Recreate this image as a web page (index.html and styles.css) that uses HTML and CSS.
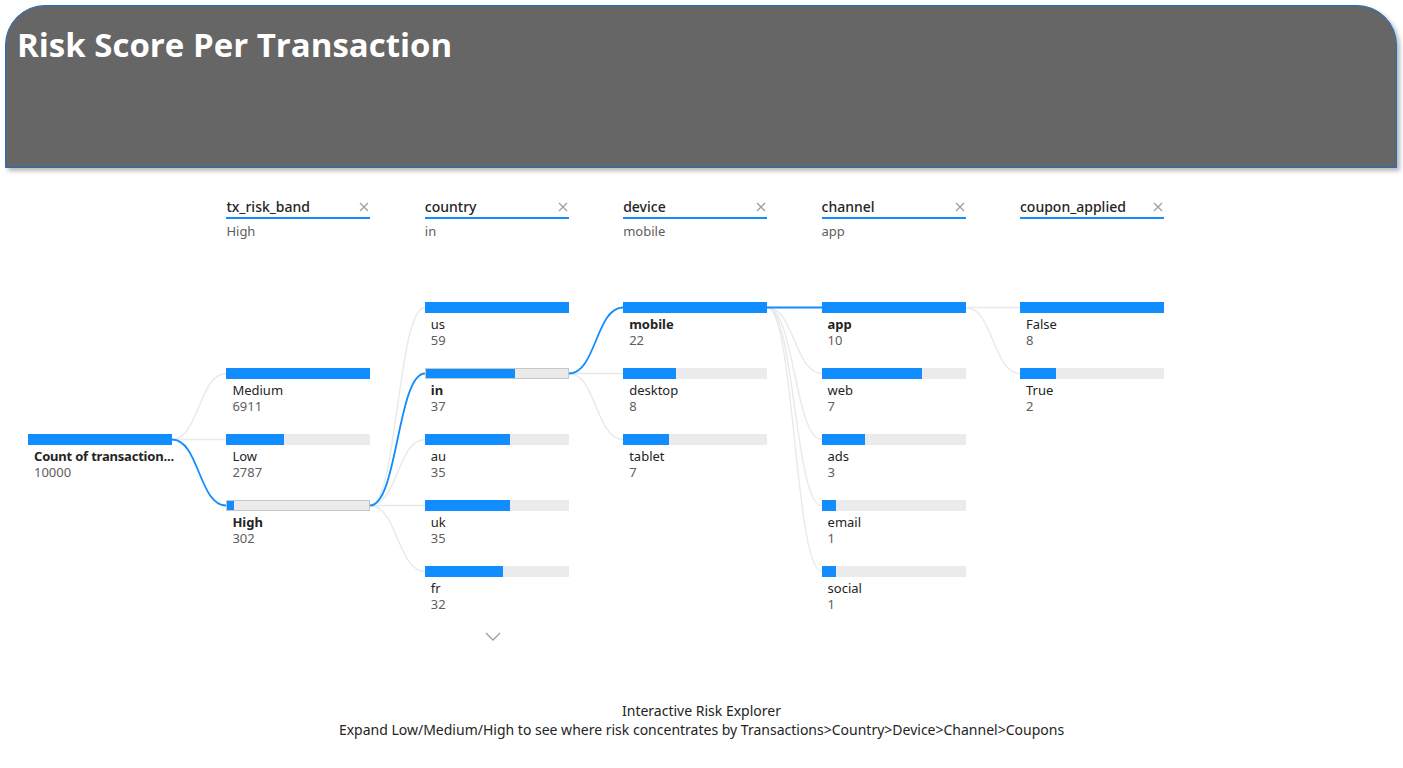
FILE: index.html
```html
<!DOCTYPE html>
<html lang="en">
<head>
<meta charset="utf-8">
<title>Risk Score Per Transaction</title>
<link rel="stylesheet" href="styles.css">
</head>
<body>
<header class="banner">
  <h1 class="banner-title">Risk Score Per Transaction</h1>
</header>

<main class="tree">
  <svg class="links" viewBox="0 197 1403 504" width="1403" height="504" aria-hidden="true">
    <g class="link-muted">
      <path d="M172 439.5 C199 439.5 199 373.5 226 373.5"/>
      <path d="M172 439.5 L226 439.5"/>
      <path d="M370 505.5 C397.5 505.5 397.5 307.5 425 307.5"/>
      <path d="M370 505.5 C397.5 505.5 397.5 439.5 425 439.5"/>
      <path d="M370 505.5 L425 505.5"/>
      <path d="M370 505.5 C397.5 505.5 397.5 571.5 425 571.5"/>
      <path d="M569 373.5 L623 373.5"/>
      <path d="M569 373.5 C596 373.5 596 439.5 623 439.5"/>
      <path d="M767 307.5 C794.5 307.5 794.5 373.5 822 373.5"/>
      <path d="M767 307.5 C794.5 307.5 794.5 439.5 822 439.5"/>
      <path d="M767 307.5 C794.5 307.5 794.5 505.5 822 505.5"/>
      <path d="M767 307.5 C794.5 307.5 794.5 571.5 822 571.5"/>
      <path d="M966 307.5 L1020 307.5"/>
      <path d="M966 307.5 C993 307.5 993 373.5 1020 373.5"/>
    </g>
    <g class="link-active">
      <path d="M172 439.5 C199 439.5 199 505.5 226 505.5"/>
      <path d="M370 505.5 C397.5 505.5 397.5 373.5 425 373.5"/>
      <path d="M569 373.5 C596 373.5 596 307.5 623 307.5"/>
      <path d="M767 307.5 L822 307.5"/>
    </g>
  </svg>

  <div class="cols">
    <section class="col">
      <div class="col-head col-head-empty"></div>
      <div class="nodes start-2">
        <div class="node">
          <div class="bar"><div class="fill" style="width:100%"></div></div>
          <div class="label strong root-label">Count of transaction...</div>
          <div class="value">10000</div>
        </div>
      </div>
    </section>

    <section class="col">
      <div class="col-head">
        <div class="head-row"><span class="head-name">tx_risk_band</span><svg class="close" viewBox="0 0 10 10"><path d="M1 1 L9 9 M9 1 L1 9"/></svg></div>
        <div class="head-sub">High</div>
      </div>
      <div class="nodes start-1">
        <div class="node">
          <div class="bar"><div class="fill" style="width:100%"></div></div>
          <div class="label">Medium</div>
          <div class="value">6911</div>
        </div>
        <div class="node">
          <div class="bar"><div class="fill" style="width:40.3%"></div></div>
          <div class="label">Low</div>
          <div class="value">2787</div>
        </div>
        <div class="node">
          <div class="bar selected"><div class="fill" style="width:4.4%"></div></div>
          <div class="label strong">High</div>
          <div class="value">302</div>
        </div>
      </div>
    </section>

    <section class="col">
      <div class="col-head">
        <div class="head-row"><span class="head-name">country</span><svg class="close" viewBox="0 0 10 10"><path d="M1 1 L9 9 M9 1 L1 9"/></svg></div>
        <div class="head-sub">in</div>
      </div>
      <div class="nodes start-0">
        <div class="node">
          <div class="bar"><div class="fill" style="width:100%"></div></div>
          <div class="label">us</div>
          <div class="value">59</div>
        </div>
        <div class="node">
          <div class="bar selected"><div class="fill" style="width:62.7%"></div></div>
          <div class="label strong">in</div>
          <div class="value">37</div>
        </div>
        <div class="node">
          <div class="bar"><div class="fill" style="width:59.3%"></div></div>
          <div class="label">au</div>
          <div class="value">35</div>
        </div>
        <div class="node">
          <div class="bar"><div class="fill" style="width:59.3%"></div></div>
          <div class="label">uk</div>
          <div class="value">35</div>
        </div>
        <div class="node">
          <div class="bar"><div class="fill" style="width:54.2%"></div></div>
          <div class="label">fr</div>
          <div class="value">32</div>
        </div>
        <div class="more">
          <svg class="chevron" viewBox="0 0 16 9"><path d="M1 1 L8 8 L15 1"/></svg>
        </div>
      </div>
    </section>

    <section class="col">
      <div class="col-head">
        <div class="head-row"><span class="head-name">device</span><svg class="close" viewBox="0 0 10 10"><path d="M1 1 L9 9 M9 1 L1 9"/></svg></div>
        <div class="head-sub">mobile</div>
      </div>
      <div class="nodes start-0">
        <div class="node">
          <div class="bar"><div class="fill" style="width:100%"></div></div>
          <div class="label strong">mobile</div>
          <div class="value">22</div>
        </div>
        <div class="node">
          <div class="bar"><div class="fill" style="width:36.4%"></div></div>
          <div class="label">desktop</div>
          <div class="value">8</div>
        </div>
        <div class="node">
          <div class="bar"><div class="fill" style="width:31.8%"></div></div>
          <div class="label">tablet</div>
          <div class="value">7</div>
        </div>
      </div>
    </section>

    <section class="col">
      <div class="col-head">
        <div class="head-row"><span class="head-name">channel</span><svg class="close" viewBox="0 0 10 10"><path d="M1 1 L9 9 M9 1 L1 9"/></svg></div>
        <div class="head-sub">app</div>
      </div>
      <div class="nodes start-0">
        <div class="node">
          <div class="bar"><div class="fill" style="width:100%"></div></div>
          <div class="label strong">app</div>
          <div class="value">10</div>
        </div>
        <div class="node">
          <div class="bar"><div class="fill" style="width:70%"></div></div>
          <div class="label">web</div>
          <div class="value">7</div>
        </div>
        <div class="node">
          <div class="bar"><div class="fill" style="width:30%"></div></div>
          <div class="label">ads</div>
          <div class="value">3</div>
        </div>
        <div class="node">
          <div class="bar"><div class="fill" style="width:10%"></div></div>
          <div class="label">email</div>
          <div class="value">1</div>
        </div>
        <div class="node">
          <div class="bar"><div class="fill" style="width:10%"></div></div>
          <div class="label">social</div>
          <div class="value">1</div>
        </div>
      </div>
    </section>

    <section class="col">
      <div class="col-head">
        <div class="head-row"><span class="head-name">coupon_applied</span><svg class="close" viewBox="0 0 10 10"><path d="M1 1 L9 9 M9 1 L1 9"/></svg></div>
        <div class="head-sub"></div>
      </div>
      <div class="nodes start-0">
        <div class="node">
          <div class="bar"><div class="fill" style="width:100%"></div></div>
          <div class="label">False</div>
          <div class="value">8</div>
        </div>
        <div class="node">
          <div class="bar"><div class="fill" style="width:25%"></div></div>
          <div class="label">True</div>
          <div class="value">2</div>
        </div>
      </div>
    </section>
  </div>
</main>

<footer class="caption">
  <p>Interactive Risk Explorer</p>
  <p>Expand Low/Medium/High to see where risk concentrates by Transactions&gt;Country&gt;Device&gt;Channel&gt;Coupons</p>
</footer>
</body>
</html>
```

FILE: styles.css
```css
* { box-sizing: border-box; }

html, body {
  margin: 0;
  padding: 0;
  background: #ffffff;
}

body {
  font-family: "Noto Sans", "Open Sans", "Liberation Sans", sans-serif;
  color: #252423;
  width: 1403px;
  height: 768px;
  overflow: hidden;
}

.banner {
  margin: 5px 6px 0 5px;
  height: 163px;
  background: #666666;
  border: 1px solid #1f6fc5;
  border-radius: 40px 40px 0 0;
  box-shadow: 3px 3px 4px rgba(0, 0, 0, 0.28);
  padding: 20px 0 0 11px;
}

.banner-title {
  margin: 0;
  font-family: "Open Sans", "Noto Sans", sans-serif;
  font-weight: 700;
  font-size: 33px;
  line-height: 38px;
  color: #ffffff;
  letter-spacing: 0;
}

.tree {
  position: relative;
  margin-top: 29px;
  height: 504px;
}

.links {
  position: absolute;
  top: 0;
  left: 0;
  pointer-events: none;
}

.links path {
  fill: none;
}

.link-muted path {
  stroke: #e9e9e9;
  stroke-width: 1.4;
}

.link-active path {
  stroke: #118dff;
  stroke-width: 1.8;
}

.cols {
  position: relative;
  display: grid;
  grid-template-columns: repeat(6, 144px);
  column-gap: 54.4px;
  padding-left: 28px;
}

.col-head {
  height: 43px;
}

.head-row {
  display: flex;
  align-items: center;
  justify-content: space-between;
  height: 22px;
  border-bottom: 2px solid #118dff;
  padding-bottom: 1px;
}

.col-head-empty .head-row { border: 0; }

.head-name {
  font-size: 14px;
  line-height: 20px;
  font-weight: 500;
  color: #252423;
}

.close {
  width: 10px;
  height: 10px;
  margin-right: 1px;
}

.close path {
  stroke: #a19f9d;
  stroke-width: 1.3;
  fill: none;
}

.head-sub {
  margin-top: 3px;
  font-size: 13px;
  line-height: 18px;
  color: #605e5c;
}

.nodes.start-0 { padding-top: 62px; }
.nodes.start-1 { padding-top: 128px; }
.nodes.start-2 { padding-top: 194px; }

.node {
  height: 66px;
}

.bar {
  height: 11px;
  background: #ebebeb;
  display: flex;
}

.bar.selected {
  border: 1px solid #c6c6c6;
}

.fill {
  height: 100%;
  background: #118dff;
}

.label {
  margin-top: 3px;
  padding-left: 6px;
  font-size: 13px;
  line-height: 16px;
  color: #252423;
  white-space: nowrap;
}

.label.strong {
  font-weight: 700;
}

.root-label {
  letter-spacing: -0.2px;
}

.value {
  padding-left: 6px;
  font-size: 13px;
  line-height: 16px;
  color: #605e5c;
}

.more {
  display: flex;
  justify-content: center;
  padding-right: 8px;
}

.chevron {
  width: 16px;
  height: 9px;
}

.chevron path {
  fill: none;
  stroke: #a19f9d;
  stroke-width: 1.4;
}

.caption {
  text-align: center;
  font-size: 14px;
  line-height: 19px;
  color: #252423;
}

.caption p {
  margin: 0;
}
```
